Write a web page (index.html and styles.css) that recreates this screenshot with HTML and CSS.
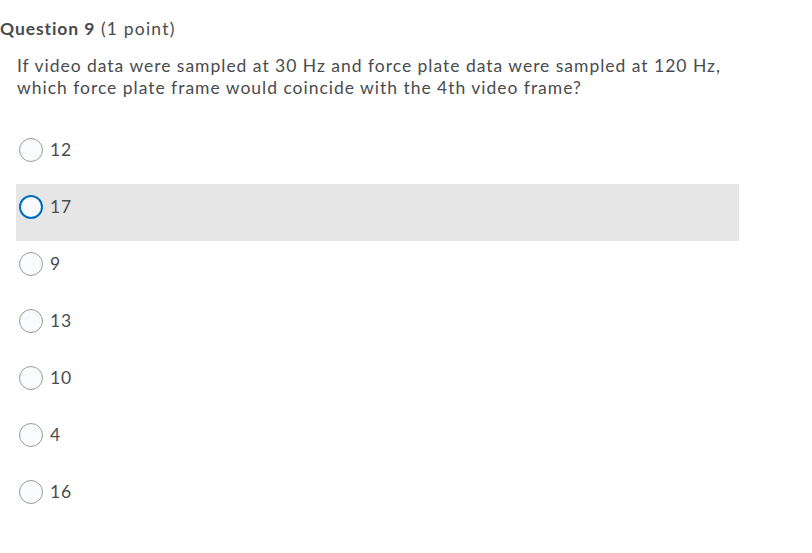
FILE: index.html
```html
<!DOCTYPE html>
<html>
<head>
<meta charset="utf-8">
<link rel="stylesheet" href="styles.css">
</head>
<body>
<div class="page">
  <h2 class="qtitle"><span class="qnum">Question 9</span> <span class="qpts">(1 point)</span></h2>
  <div class="qbody">
    <p class="qtext">If video data were sampled at 30 Hz and force plate data were sampled at 120 Hz, which force plate frame would coincide with the 4th video frame?</p>
    <div class="choices">
      <div class="choice"><span class="radio"></span><span class="label">12</span></div>
      <div class="choice hover"><span class="radio focus"></span><span class="label">17</span></div>
      <div class="choice"><span class="radio"></span><span class="label">9</span></div>
      <div class="choice"><span class="radio"></span><span class="label">13</span></div>
      <div class="choice"><span class="radio"></span><span class="label">10</span></div>
      <div class="choice"><span class="radio"></span><span class="label">4</span></div>
      <div class="choice"><span class="radio"></span><span class="label">16</span></div>
    </div>
  </div>
</div>
</body>
</html>
```
FILE: styles.css
```css
html, body {
  margin: 0;
  padding: 0;
  background: #ffffff;
}
body {
  font-family: Lato, "Noto Sans", sans-serif;
  color: #494c4e;
}
.page {
  padding-top: 17px;
}
.qtitle {
  margin: 0;
  font-size: 17.5px;
  line-height: 24px;
  font-weight: 400;
  letter-spacing: 1.2px;
  color: #494c4e;
}
.qnum {
  font-weight: 700;
  letter-spacing: 0.9px;
}
.qbody {
  padding-left: 16px;
  width: 723px;
}
.qtext {
  margin: 14px 0 0 1px;
  font-size: 17.5px;
  line-height: 22px;
  letter-spacing: 0.98px;
}
.choices {
  margin-top: 28px;
  display: flex;
  flex-direction: column;
}
.choice {
  box-sizing: border-box;
  height: 57px;
  display: flex;
  align-items: flex-start;
  gap: 7px;
  padding: 11px 0 0 3px;
  font-size: 17.5px;
}
.choice.hover {
  background: #e6e6e6;
}
.radio {
  box-sizing: border-box;
  width: 24px;
  height: 24px;
  flex: none;
  border-radius: 50%;
  border: 1px solid #999999;
  background: #f9fbff;
}
.radio.focus {
  border: 2px solid #006fbf;
}
.label {
  line-height: 24px;
  letter-spacing: 0.9px;
}
```
